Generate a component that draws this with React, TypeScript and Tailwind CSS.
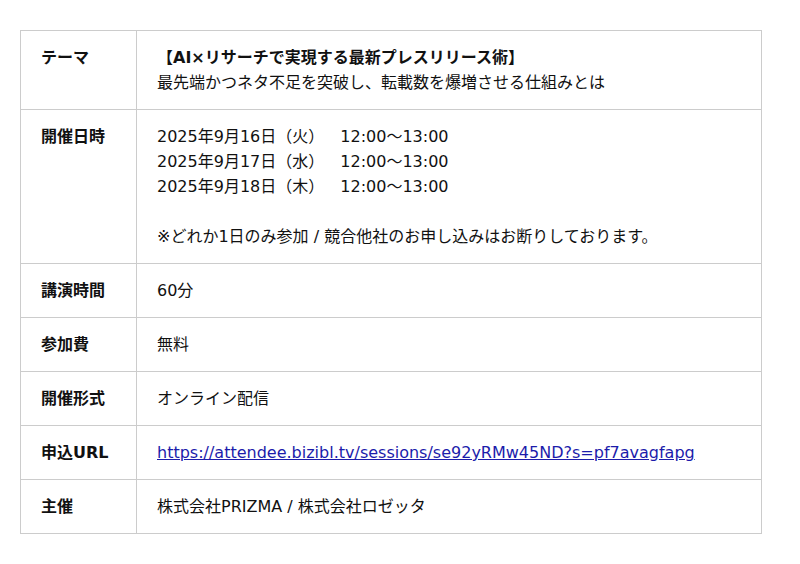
import {FC} from 'react';

type Row = {label: string; content: React.ReactNode};

const dates = ['2025年9月16日（火）', '2025年9月17日（水）', '2025年9月18日（木）'];

const rows: Row[] = [
  {
    label: 'テーマ',
    content: (
      <>
        <div className="font-bold">【AI×リサーチで実現する最新プレスリリース術】</div>
        <div>最先端かつネタ不足を突破し、転載数を爆増させる仕組みとは</div>
      </>
    ),
  },
  {
    label: '開催日時',
    content: (
      <>
        {dates.map(d => (
          <div key={d}>
            {d}
            <span className="ml-4">12:00〜13:00</span>
          </div>
        ))}
        <div>&nbsp;</div>
        <div>※どれか1日のみ参加 / 競合他社のお申し込みはお断りしております。</div>
      </>
    ),
  },
  {label: '講演時間', content: '60分'},
  {label: '参加費', content: '無料'},
  {label: '開催形式', content: 'オンライン配信'},
  {
    label: '申込URL',
    content: (
      <a href="#" className="text-[#1c1cab] underline">
        https://attendee.bizibl.tv/sessions/se92yRMw45ND?s=pf7avagfapg
      </a>
    ),
  },
  {label: '主催', content: '株式会社PRIZMA / 株式会社ロゼッタ'},
];

const App: FC = () => {
  return (
    <div className="min-h-[564px] bg-white pt-[30px] pl-5 font-['DejaVu_Sans','Noto_Sans_CJK_JP',sans-serif] text-[16px] leading-[25px] text-[#111]">
      <table className="w-[742px] border-collapse">
        <tbody>
          {rows.map(row => (
            <tr key={row.label}>
              <th className="w-[116px] border border-[#cccccc] px-5 py-[14px] text-left align-top font-bold">
                {row.label}
              </th>
              <td className="border border-[#cccccc] px-5 py-[14px] align-top">{row.content}</td>
            </tr>
          ))}
        </tbody>
      </table>
    </div>
  );
};

export default App;
